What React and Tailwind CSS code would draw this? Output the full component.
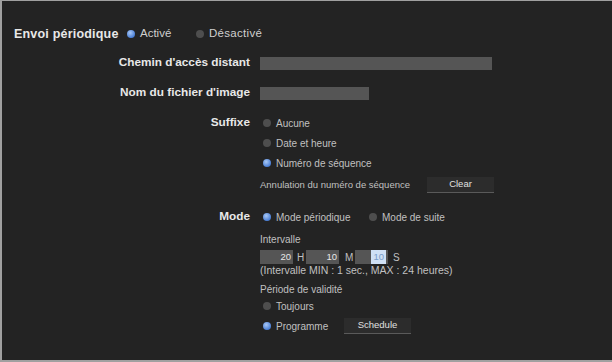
import React from 'react';

const Radio = ({ on }) => (
  <span
    className={`inline-block w-[8px] h-[8px] rounded-full shrink-0 ${
      on ? 'bg-[radial-gradient(circle_at_40%_35%,#a9c8f5,#4a7fd6_70%)]' : 'bg-[#4e4e4e]'
    }`}
  />
);

const Option = ({ on, children, className = '' }) => (
  <div className={`flex items-center gap-[5px] ${className}`}>
    <Radio on={on} />
    <span>{children}</span>
  </div>
);

const Button = ({ children, className = '' }) => (
  <div
    className={`h-[16px] flex items-center justify-center bg-[#2c2c2c] border-b border-[#5a5a5a] text-[#e0e0e0] text-[9.5px] ${className}`}
  >
    {children}
  </div>
);

const Field = ({ label, children, className = '' }) => (
  <div className={`flex ${className}`}>
    <div className="w-[248px] shrink-0 h-[16px] flex items-center justify-end font-bold text-[11.8px] text-[#e8e8e8]">
      {label}
    </div>
    <div className="pl-[10px] flex-1">{children}</div>
  </div>
);

const TimeBox = ({ value, selected }) => (
  <div className="w-[33px] h-[14px] bg-[#555] flex items-center justify-end pr-[2px] text-[9.5px] text-[#e8e8e8]">
    {selected ? <span className="bg-[#cfe0f5] text-[#7a9cc8] px-[2px]">{value}</span> : value}
  </div>
);

export default function App() {
  return (
    <div
      className="w-[612px] h-[362px] overflow-hidden bg-[#232323] border-t border-l-2 border-b-2 border-[#a0a0a0] text-[#c0c0c0] text-[10px]"
      style={{ fontFamily: '"Liberation Sans", Arial, sans-serif' }}
    >
      <div className="pt-[25px]">
        {/* Envoi périodique */}
        <div className="h-[16px] flex items-center pl-[12px]">
          <span className="font-bold text-[12.5px] text-[#e8e8e8] w-[113px] tracking-[0.2px]">Envoi périodique</span>
          <Option on className="text-[11.5px] text-[#cfcfcf] w-[69px]">Activé</Option>
          <Option className="text-[11.5px] text-[#cfcfcf] tracking-[0.3px]">Désactivé</Option>
        </div>

        <Field label="Chemin d'accès distant" className="mt-[13px]">
          <div className="h-[16px] flex items-center">
            <div className="w-[232px] h-[13px] bg-[#555]" />
          </div>
        </Field>

        <Field label="Nom du fichier d'image" className="mt-[14px]">
          <div className="h-[16px] flex items-center">
            <div className="w-[109px] h-[13px] bg-[#555]" />
          </div>
        </Field>

        <Field label="Suffixe" className="mt-[14px]">
          <div className="flex flex-col">
            <Option className="h-[16px] pl-[3px]">Aucune</Option>
            <Option className="h-[16px] pl-[3px] mt-[4px]">Date et heure</Option>
            <Option on className="h-[16px] pl-[3px] mt-[4px]">Numéro de séquence</Option>
            <div className="h-[16px] mt-[6px] flex items-center">
              <span className="w-[167px] text-[9.5px]">Annulation du numéro de séquence</span>
              <Button className="w-[67px]">Clear</Button>
            </div>
          </div>
        </Field>

        <Field label="Mode" className="mt-[16px]">
          <div className="flex flex-col">
            <div className="h-[16px] flex items-center pl-[3px]">
              <Option on className="w-[106px]">Mode périodique</Option>
              <Option>Mode de suite</Option>
            </div>
            <div className="h-[16px] mt-[6px] flex items-center">Intervalle</div>
            <div className="h-[14px] mt-[3px] flex items-center">
              <TimeBox value="20" />
              <span className="ml-[4px] w-[9px]">H</span>
              <TimeBox value="10" />
              <span className="ml-[6px] w-[10px]">M</span>
              <TimeBox value="10" selected />
              <span className="ml-[5px]">S</span>
            </div>
            <div className="h-[12px] mt-[1px] flex items-center text-[10.5px]">
              (Intervalle MIN : 1 sec., MAX : 24 heures)
            </div>
            <div className="h-[14px] mt-[5px] flex items-center">Période de validité</div>
            <Option className="h-[16px] mt-[2px] pl-[3px]">Toujours</Option>
            <div className="h-[16px] mt-[4px] flex items-center pl-[3px]">
              <Option on className="w-[81px]">Programme</Option>
              <Button className="w-[67px]">Schedule</Button>
            </div>
          </div>
        </Field>
      </div>
    </div>
  );
}
